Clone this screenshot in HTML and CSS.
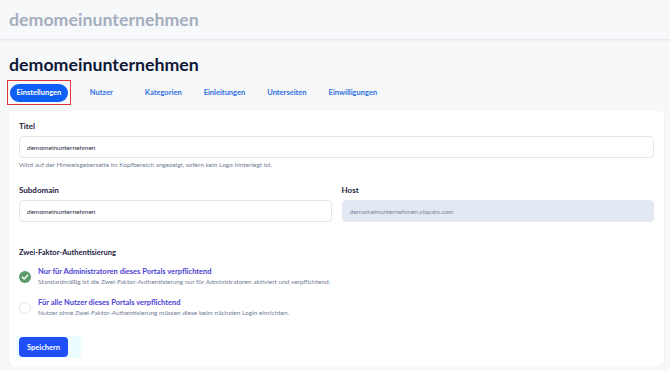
FILE: index.html
```html
<!DOCTYPE html>
<html lang="de">
<head>
  <meta charset="UTF-8">
  <meta name="viewport" content="width=device-width, initial-scale=1.0">
  <title>Einstellungen - demomeinunternehmen</title>
  <link rel="stylesheet" href="styles.css">
</head>
<body>
  <header class="topbar">
    <div class="topbar-title">demomeinunternehmen</div>
  </header>

  <main class="page">
    <h1 class="page-title">demomeinunternehmen</h1>

    <nav class="tabs">
      <span class="tab-outline"><a href="#" class="tab active">Einstellungen</a></span>
      <a href="#" class="tab">Nutzer</a>
      <a href="#" class="tab">Kategorien</a>
      <a href="#" class="tab">Einleitungen</a>
      <a href="#" class="tab">Unterseiten</a>
      <a href="#" class="tab">Einwilligungen</a>
    </nav>

    <form class="card">
      <div class="field">
        <label class="label" for="titel">Titel</label>
        <input class="input" id="titel" type="text" value="demomeinunternehmen">
        <div class="hint">Wird auf der Hinweisgeberseite im Kopfbereich angezeigt, sofern kein Logo hinterlegt ist.</div>
      </div>

      <div class="row">
        <div class="field">
          <label class="label" for="subdomain">Subdomain</label>
          <input class="input" id="subdomain" type="text" value="demomeinunternehmen">
        </div>
        <div class="field">
          <label class="label" for="host">Host</label>
          <input class="input disabled" id="host" type="text" value="demomeinunternehmen.vispato.com" disabled>
        </div>
      </div>

      <div class="section-title">Zwei-Faktor-Authentisierung</div>

      <div class="option">
        <span class="radio checked">
          <svg viewBox="0 0 12 12" width="12" height="12">
            <circle cx="6" cy="6" r="6" fill="#5e9b6c"/>
            <path d="M3.4 6.2 L5.2 7.9 L8.6 4.3" fill="none" stroke="#fff" stroke-width="1.4" stroke-linecap="round" stroke-linejoin="round"/>
          </svg>
        </span>
        <div class="option-text">
          <div class="option-title">Nur für Administratoren dieses Portals verpflichtend</div>
          <div class="option-desc">Standardmäßig ist die Zwei-Faktor-Authentisierung nur für Administratoren aktiviert und verpflichtend.</div>
        </div>
      </div>

      <div class="option">
        <span class="radio"></span>
        <div class="option-text">
          <div class="option-title">Für alle Nutzer dieses Portals verpflichtend</div>
          <div class="option-desc">Nutzer ohne Zwei-Faktor-Authentisierung müssen diese beim nächsten Login einrichten.</div>
        </div>
      </div>

      <div class="actions">
        <button type="button" class="btn">Speichern</button>
      </div>
    </form>
  </main>
</body>
</html>
```

FILE: styles.css
```css
body {
  margin: 0;
  font-family: Lato, "Open Sans", sans-serif;
  background-color: #f7f8fa;
  color: #1c2240;
}
.topbar {
  height: 39px;
  background-color: #f7f8fa;
  border-bottom: 1px solid #e6e8ec;
  box-shadow: 0 1px 3px rgba(0,0,0,0.05);
  padding: 0 9px;
  display: flex;
  align-items: center;
}
.topbar-title {
  font-size: 17.75px;
  font-weight: bold;
  color: #a4aebd;
  margin-top: -2px;
}
.page {
  padding: 0 6px 0 9px;
}
.page-title {
  margin: 12px 0 0;
  font-size: 17.75px;
  font-weight: bold;
  color: #0f1838;
  line-height: 24px;
}
.tabs {
  display: flex;
  align-items: center;
  margin-top: 4px;
}
.tab-outline {
  display: inline-block;
  border: 1.5px solid #e0323c;
  padding: 2.5px 1.5px;
  margin: 0 8px 0 -2px;
}
.tab {
  display: inline-block;
  font-size: 7.5px;
  font-weight: bold;
  color: #2f6fe0;
  text-decoration: none;
  padding: 0 11px;
  min-width: 55px;
  box-sizing: border-box;
  line-height: 10px;
}
.tab.active {
  display: block;
  background-color: #0e5ff5;
  color: #fff;
  border-radius: 9px;
  padding: 4px 7px;
  min-width: 0;
}
.card {
  margin-top: 6px;
  background: #fff;
  border-radius: 5px;
  box-shadow: 0 1px 3px rgba(0,0,0,0.06);
  padding: 10px 10px 8px;
}
.field {
  display: flex;
  flex-direction: column;
  flex: 1;
}
.label {
  font-size: 8px;
  font-weight: bold;
  line-height: 10px;
  color: #1c2240;
  margin-bottom: 5px;
}
.input {
  height: 22px;
  box-sizing: border-box;
  border: 1px solid #e2e7ee;
  border-radius: 4px;
  padding: 0 7px;
  font-family: inherit;
  font-size: 6.5px;
  color: #2a3044;
  background: #fff;
}
.input.disabled {
  background-color: #e3e9f3;
  border-color: #e3e9f3;
  color: #7d8699;
}
.hint {
  font-size: 6.5px;
  line-height: 8px;
  color: #738096;
  margin-top: 3px;
}
.row {
  display: flex;
  gap: 10px;
  margin-top: 16px;
}
.section-title {
  font-size: 7.5px;
  font-weight: bold;
  line-height: 10px;
  color: #1c2240;
  margin-top: 26px;
}
.option {
  display: flex;
  align-items: center;
  gap: 7px;
  margin-top: 9px;
}
.option + .option {
  margin-top: 12px;
}
.radio {
  width: 12px;
  height: 12px;
  box-sizing: border-box;
  border-radius: 50%;
  border: 1px solid #e3e6ec;
  background: #fff;
  flex-shrink: 0;
}
.radio svg {
  display: block;
}
.radio.checked {
  border: none;
}
.option-title {
  font-size: 7.5px;
  font-weight: bold;
  line-height: 10px;
  color: #4b3fd3;
}
.option-desc {
  font-size: 6.5px;
  line-height: 8px;
  color: #738096;
  margin-top: 1px;
}
.actions {
  margin-top: 19px;
  display: inline-block;
  background-color: #ecfdff;
  padding: 1px 13px 1px 3px;
  margin-left: -3px;
}
.btn {
  display: block;
  background-color: #1e4ff8;
  color: #fff;
  font-family: inherit;
  font-weight: bold;
  font-size: 7.5px;
  border: none;
  border-radius: 4px;
  height: 20px;
  padding: 0 8px;
}
```
